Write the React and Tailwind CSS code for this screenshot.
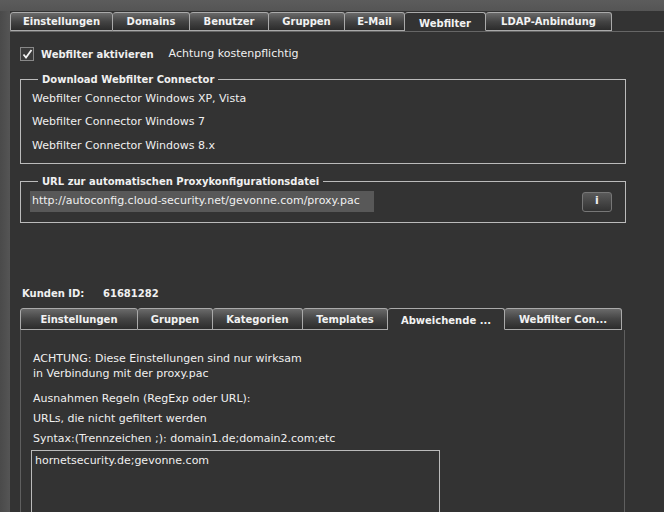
import React from "react";

const font = { fontFamily: '"DejaVu Sans", Verdana, sans-serif' };

function Tab({ label, w, active, first }) {
  return (
    <div
      className={
        "flex items-center justify-center h-full rounded-t-[3px] border-t border-r border-[#aaa] text-[10px] font-bold text-[#f2f2f2] " +
        (first ? "border-l " : "") +
        (active
          ? "bg-[#333] pt-[3px] border-b border-b-[#333]"
          : "bg-gradient-to-b from-[#6a6a6a] via-[#444] to-[#2c2c2c] border-b border-b-[#aaa]")
      }
      style={{ width: w }}
    >
      {label}
    </div>
  );
}

export default function App() {
  const topTabs = [
    ["Einstellungen", 103],
    ["Domains", 77],
    ["Benutzer", 79],
    ["Gruppen", 76],
    ["E-Mail", 60],
    ["Webfilter", 81, true],
    ["LDAP-Anbindung", 126],
  ];
  const subTabs = [
    ["Einstellungen", 118],
    ["Gruppen", 75],
    ["Kategorien", 90],
    ["Templates", 85],
    ["Abweichende ...", 117, true],
    ["Webfilter Con...", 117],
  ];
  return (
    <div
      className="w-[664px] h-[512px] overflow-hidden bg-[#4f4f4f] flex flex-col text-[#f0f0f0]"
      style={font}
    >
      <div className="h-[11px] shrink-0 bg-gradient-to-b from-[#5c5c5c] to-[#555]" />
      <div className="flex flex-1 min-h-0">
        <div className="w-[10px] shrink-0 bg-gradient-to-r from-[#4a4a4a] to-[#555]" />
        <div className="flex-1 bg-[#333] flex flex-col">
          {/* top tabs */}
          <div className="flex h-[21px] pt-[1px] border-b border-[#666] shrink-0">
            {topTabs.map(([l, w, a], i) => (
              <Tab key={l} label={l} w={w} active={a} first={i === 0} />
            ))}
          </div>
          <div className="pl-[10px] flex flex-col">
            {/* checkbox row */}
            <div className="flex items-center h-[16px] mt-[14px] text-[11px]">
              <div className="w-[14px] h-[14px] border border-[#888] bg-[#3b3b3b] flex items-center justify-center">
                <svg width="11" height="10" viewBox="0 0 11 10">
                  <path d="M1.5 5.5 L4 8.5 L9.5 1" stroke="#f4f4f4" strokeWidth="1.8" fill="none" />
                </svg>
              </div>
              <span className="ml-[7px] font-bold text-[10px]">Webfilter aktivieren</span>
              <span className="ml-[15px]">Achtung kostenpflichtig</span>
            </div>
            {/* fieldset 1 */}
            <fieldset className="mt-[11px] w-[606px] h-[91px] border border-[#bbb] text-[11px]">
              <legend className="ml-[17px] px-[4px] font-bold text-[10px] leading-[13px]">
                Download Webfilter Connector
              </legend>
              <div className="pl-[11px]">
                <div className="mt-[6px] leading-[13px]">Webfilter Connector Windows XP, Vista</div>
                <div className="mt-[10px] leading-[13px]">Webfilter Connector Windows 7</div>
                <div className="mt-[11px] leading-[13px]">Webfilter Connector Windows 8.x</div>
              </div>
            </fieldset>
            {/* fieldset 2 */}
            <fieldset className="mt-[11px] w-[606px] h-[48px] border border-[#bbb] text-[11px]">
              <legend className="ml-[17px] px-[4px] font-bold text-[10px] leading-[13px]">
                URL zur automatischen Proxykonfigurationsdatei
              </legend>
              <div className="flex items-center justify-between mt-[3px] pl-[9px] pr-[13px]">
                <div className="h-[21px] w-[344px] bg-[#585858] flex items-center pl-[2px]">
                  http://autoconfig.cloud-security.net/gevonne.com/proxy.pac
                </div>
                <div className="w-[30px] h-[20px] rounded-[3px] border border-[#777] bg-gradient-to-b from-[#5a5a5a] to-[#333] flex items-center justify-center font-bold text-[11px]">
                  i
                </div>
              </div>
            </fieldset>
            {/* Kunden ID */}
            <div className="mt-[63px] flex items-center h-[14px] text-[10px] font-bold">
              <span className="ml-[2px] w-[81px]">Kunden ID:</span>
              <span>61681282</span>
            </div>
            {/* sub tabs */}
            <div className="mt-[8px] flex h-[22px]">
              {subTabs.map(([l, w, a], i) => (
                <Tab key={l + i} label={l} w={w} active={a} first={i === 0} />
              ))}
            </div>
            <div className="w-[605px] border-l border-r border-[#5f5f5f] h-[200px] text-[11px] pl-[12px]">
              <div className="mt-[21px] leading-[15px]">
                ACHTUNG: Diese Einstellungen sind nur wirksam
                <br />
                in Verbindung mit der proxy.pac
              </div>
              <div className="mt-[11px] leading-[13px]">Ausnahmen Regeln (RegExp oder URL):</div>
              <div className="mt-[7px] leading-[13px]">URLs, die nicht gefiltert werden</div>
              <div className="mt-[7px] leading-[13px]">Syntax:(Trennzeichen ;): domain1.de;domain2.com;etc</div>
              <div className="mt-[5px] -ml-[2px] w-[409px] h-[80px] border border-[#bbb] pl-[3px] pt-[3px] leading-[13px]">
                hornetsecurity.de;gevonne.com
              </div>
            </div>
          </div>
        </div>
      </div>
    </div>
  );
}
